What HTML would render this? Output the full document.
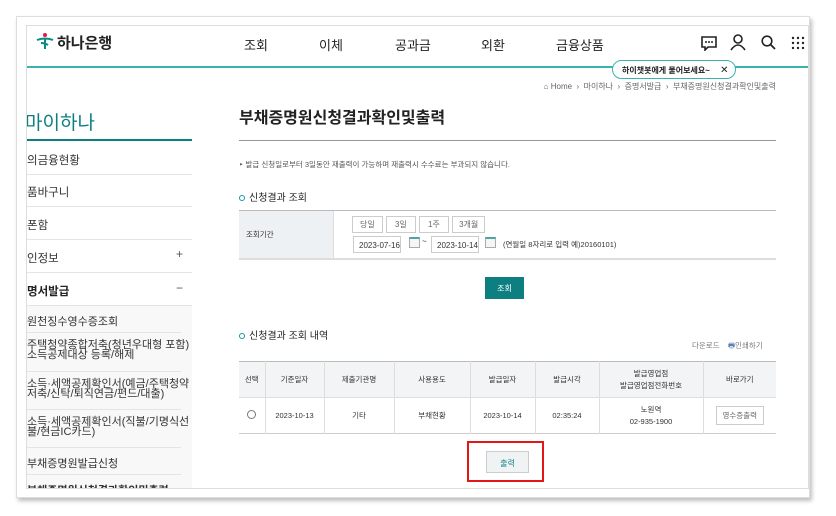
<!DOCTYPE html>
<html><head><meta charset="utf-8"><style>
*{margin:0;padding:0;box-sizing:border-box}
body{width:836px;height:516px;background:#fff;font-family:"Liberation Sans","Noto Sans CJK KR",sans-serif;color:#333;position:relative;overflow:hidden}
.a{position:absolute;white-space:nowrap}
.outer{position:absolute;left:16px;top:16px;width:794px;height:482px;border:1px solid #ddd;box-shadow:2px 3px 4px rgba(0,0,0,.25);background:#fff}
.inner{position:absolute;left:26px;top:25px;width:783px;height:464px;border:1px solid #ddd;overflow:hidden;background:#fff}
.nav{font-size:13px;color:#222;top:35px}
.side{left:0;font-size:11.5px;color:#333}
.ln{position:absolute;height:1px;background:#e4e4e4}
.sub{position:absolute;left:0;width:165px;top:280px;height:190px;background:#f8f8f8}
th,td{border-right:1px solid #ddd;text-align:center;font-weight:normal}
</style></head><body>
<div class="outer"></div>
<div class="inner">
 <svg class="a" style="left:8px;top:6px" width="20" height="20" viewBox="0 0 20 20"><circle cx="10" cy="3" r="2" fill="#e8194a"/><path d="M2 8 Q10 5 18 8" stroke="#0a8c83" stroke-width="2" fill="none"/><path d="M10 7 L10 17 M6 11 Q10 11 13 13" stroke="#0a8c83" stroke-width="2" fill="none"/></svg>
 <div class="a" style="left:30px;top:6px;font-size:15px;font-weight:bold;color:#222">하나은행</div>
 <div class="a nav" style="left:217px;top:9px">조회</div>
 <div class="a nav" style="left:292px;top:9px">이체</div>
 <div class="a nav" style="left:368px;top:9px">공과금</div>
 <div class="a nav" style="left:454px;top:9px">외환</div>
 <div class="a nav" style="left:529px;top:9px">금융상품</div>
 <svg class="a" style="left:673px;top:9px" width="18" height="16" viewBox="0 0 18 16"><path d="M2 2h14v10H8l-3 3v-3H2z" stroke="#222" stroke-width="1.6" fill="none"/><circle cx="6" cy="7" r="1" fill="#222"/><circle cx="9" cy="7" r="1" fill="#222"/><circle cx="12" cy="7" r="1" fill="#222"/></svg>
 <svg class="a" style="left:703px;top:8px" width="16" height="17" viewBox="0 0 16 17"><circle cx="8" cy="5" r="4" stroke="#222" stroke-width="1.6" fill="none"/><path d="M1 16 Q8 6 15 16" stroke="#222" stroke-width="1.6" fill="none"/></svg>
 <svg class="a" style="left:734px;top:9px" width="15" height="15" viewBox="0 0 15 15"><circle cx="6" cy="6" r="4.8" stroke="#222" stroke-width="1.6" fill="none"/><path d="M9.5 9.5 L14 14" stroke="#222" stroke-width="1.8"/></svg>
 <svg class="a" style="left:764px;top:10px" width="14" height="14" viewBox="0 0 14 14" fill="#222"><circle cx="2" cy="2" r="1.2"/><circle cx="7" cy="2" r="1.2"/><circle cx="12" cy="2" r="1.2"/><circle cx="2" cy="7" r="1.2"/><circle cx="7" cy="7" r="1.2"/><circle cx="12" cy="7" r="1.2"/><circle cx="2" cy="12" r="1.2"/><circle cx="7" cy="12" r="1.2"/><circle cx="12" cy="12" r="1.2"/></svg>
 <div class="a" style="left:0;top:40px;width:783px;height:2px;background:#3bb3ad"></div>
 <div class="a" style="left:585px;top:34px;width:124px;height:19px;border:1px solid #3bb3ad;border-radius:10px;background:#fff;font-size:8px;font-weight:bold;color:#222;padding:4px 0 0 9px">하이챗봇에게 물어보세요~ <span style="margin-left:8px;font-weight:normal;font-size:10px">✕</span></div>
 <div class="a" style="left:450px;top:55px;font-size:8px;color:#666;width:299px;text-align:right">⌂ Home &nbsp;›&nbsp; 마이하나 &nbsp;›&nbsp; 증명서발급 &nbsp;›&nbsp; 부채증명원신청결과확인및출력</div>
 <div class="a" style="left:-2px;top:82px;font-size:19px;color:#0e7f80">마이하나</div>
 <div class="a" style="left:0;top:113px;width:165px;height:2px;background:#0e7f80"></div>
 <div class="a side" style="top:126px">의금융현황</div><div class="ln" style="left:0;top:148px;width:165px"></div>
 <div class="a side" style="top:158px">품바구니</div><div class="ln" style="left:0;top:180px;width:165px"></div>
 <div class="a side" style="top:191px">폰함</div><div class="ln" style="left:0;top:213px;width:165px"></div>
 <div class="a side" style="top:224px">인정보</div><div class="a" style="left:149px;top:221px;font-size:12px;color:#555">+</div><div class="ln" style="left:0;top:246px;width:165px"></div>
 <div class="a side" style="top:257px;font-weight:bold;color:#222">명서발급</div><div class="a" style="left:149px;top:255px;font-size:12px;color:#555">−</div>
 <div class="sub"></div>
 <div class="ln" style="left:0;top:279px;width:165px"></div>
 <div class="a side" style="top:287px;font-size:11px">원천징수영수증조회</div><div class="ln" style="left:0;top:306px;width:154px"></div>
 <div class="a side" style="top:314px;font-size:11px;line-height:10px">주택청약종합저축(청년우대형 포함)<br>소득공제대상 등록/해제</div><div class="ln" style="left:0;top:345px;width:154px"></div>
 <div class="a side" style="top:353px;font-size:11px;line-height:10px">소득·세액공제확인서(예금/주택청약<br>저축/신탁/퇴직연금/펀드/대출)</div><div class="ln" style="left:0;top:383px;width:154px"></div>
 <div class="a side" style="top:391px;font-size:11px;line-height:10px">소득·세액공제확인서(직불/기명식선<br>불/현금IC카드)</div><div class="ln" style="left:0;top:421px;width:154px"></div>
 <div class="a side" style="top:429px;font-size:11px">부채증명원발급신청</div><div class="ln" style="left:0;top:448px;width:154px"></div>
 <div class="a side" style="top:456px;font-size:11px;font-weight:bold">부채증명원신청결과확인및출력</div>
 <div class="a" style="left:212px;top:78px;font-size:16px;font-weight:bold;color:#222">부채증명원신청결과확인및출력</div>
 <div class="a" style="left:212px;top:114px;width:537px;height:1px;background:#999"></div>
 <div class="a" style="left:212px;top:133px;font-size:7.5px;color:#555">‣ 발급 신청일로부터 3일동안 재출력이 가능하며 재출력시 수수료는 부과되지 않습니다.</div>
 <div class="a" style="left:212px;top:163px;font-size:10px;color:#222"><span style="display:inline-block;width:6px;height:6px;border:1.5px solid #0e9aa0;border-radius:50%;margin-right:4px"></span>신청결과 조회</div>
 <div class="a" style="left:212px;top:184px;width:537px;height:50px;border-top:1px solid #bbb;border-bottom:2px solid #ddd"></div>
 <div class="a" style="left:212px;top:185px;width:95px;height:47px;background:#eef1f3;border-right:1px solid #ddd"></div>
 <div class="a" style="left:219px;top:203px;font-size:7.5px;color:#333">조회기간</div>
 <div class="a" style="left:325px;top:190px;font-size:8px;color:#666">
  <span style="display:inline-block;border:1px solid #ccc;padding:2px 7px;margin-right:1px">당일</span>
  <span style="display:inline-block;border:1px solid #ccc;padding:2px 8px;margin-right:1px">3일</span>
  <span style="display:inline-block;border:1px solid #ccc;padding:2px 8px;margin-right:1px">1주</span>
  <span style="display:inline-block;border:1px solid #ccc;padding:2px 6px">3개월</span></div>
 <div class="a" style="left:326px;top:210px;width:48px;height:17px;border:1px solid #ccc;font-size:8px;padding:4px 0 0 5px;color:#333">2023-07-16</div>
 <div class="a" style="left:382px;top:211px;width:11px;height:11px;border:1px solid #aaa;border-top:2px solid #4aa8a4;background:#f5f5f5"></div>
 <div class="a" style="left:395px;top:211px;font-size:8px">~</div>
 <div class="a" style="left:404px;top:210px;width:48px;height:17px;border:1px solid #ccc;font-size:8px;padding:4px 0 0 5px;color:#333">2023-10-14</div>
 <div class="a" style="left:458px;top:211px;width:11px;height:11px;border:1px solid #aaa;border-top:2px solid #4aa8a4;background:#f5f5f5"></div>
 <div class="a" style="left:476px;top:213px;font-size:7.5px;color:#333">(연월일 8자리로 입력 예)20160101)</div>
 <div class="a" style="left:458px;top:251px;width:39px;height:22px;background:#0e7f80;color:#fff;font-size:8px;text-align:center;padding-top:6px">조회</div>
 <div class="a" style="left:212px;top:301px;font-size:10px;color:#222"><span style="display:inline-block;width:6px;height:6px;border:1.5px solid #0e9aa0;border-radius:50%;margin-right:4px"></span>신청결과 조회 내역</div>
 <div class="a" style="left:665px;top:314px;font-size:7.5px;color:#777">다운로드 &nbsp;&nbsp; <span style="color:#5a7fb0">🖶</span>인쇄하기</div>
 <table class="a" style="left:212px;top:335px;width:537px;border-collapse:collapse;font-size:7.5px;color:#333;border-top:1px solid #bbb;border-bottom:1px solid #ccc">
  <tr style="height:36px;background:#f2f4f5;border-bottom:1px solid #ddd"><th style="width:26px">선택</th><th style="width:59px">기준일자</th><th style="width:70px">제출기관명</th><th style="width:76px">사용용도</th><th style="width:65px">발급일자</th><th style="width:64px">발급시각</th><th style="width:104px;line-height:12px">발급영업점<br>발급영업점전화번호</th><th style="border-right:none">바로가기</th></tr>
  <tr style="height:36px"><td><span style="display:inline-block;width:9px;height:9px;border:1px solid #777;border-radius:50%"></span></td><td>2023-10-13</td><td>기타</td><td>부채현황</td><td>2023-10-14</td><td>02:35:24</td><td style="line-height:12px">노원역<br>02-935-1900</td><td style="border-right:none"><span style="display:inline-block;border:1px solid #ccc;padding:3px 6px;color:#666">영수증출력</span></td></tr>
 </table>
 <div class="a" style="left:459px;top:425px;width:43px;height:22px;border:1px solid #ccc;background:#f0f3f4;font-size:8px;color:#0e7f80;text-align:center;padding-top:6px">출력</div>
 <div class="a" style="left:440px;top:415px;width:77px;height:41px;border:2px solid #e01818"></div>
</div>
</body></html>
